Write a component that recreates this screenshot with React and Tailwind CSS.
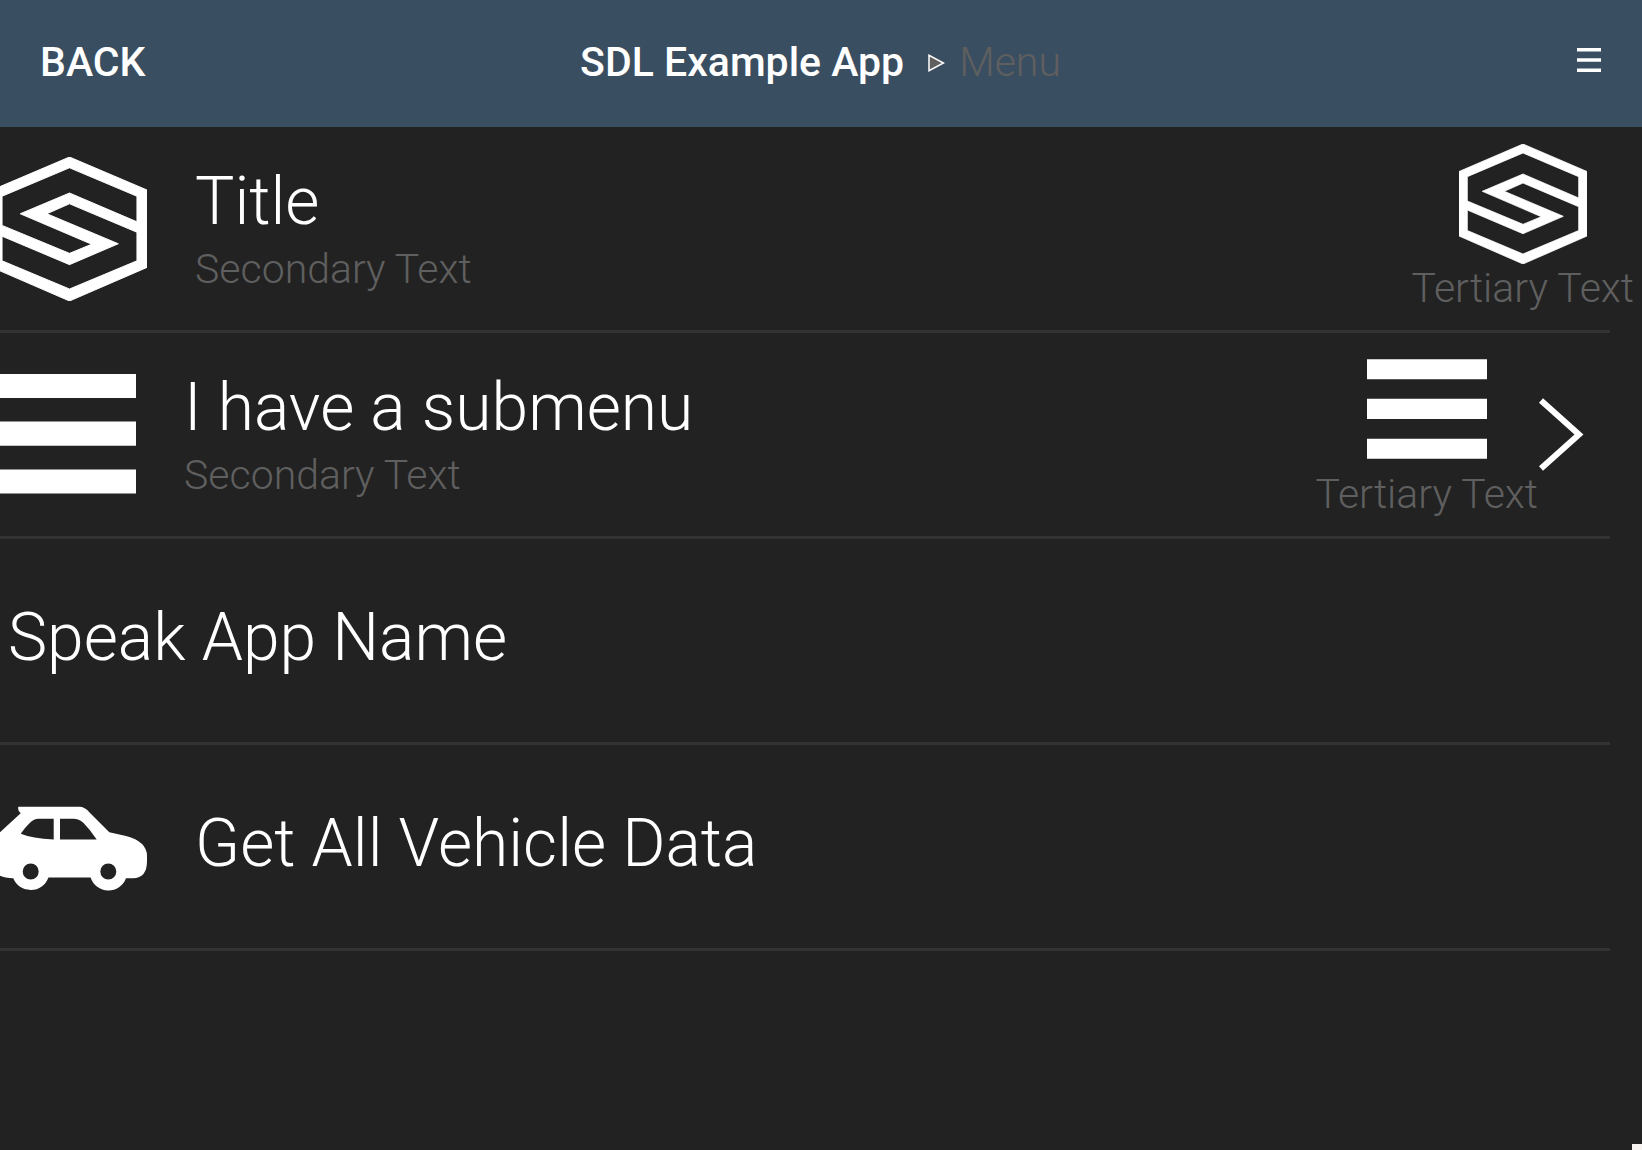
function SdlLogo({ className }) {
  return (
    <svg className={className} viewBox="0 0 128 120" preserveAspectRatio="none" fill="currentColor" stroke="currentColor" strokeWidth="0.800" fillRule="evenodd" aria-hidden="true">
      <path d="M64 0 128 27.5V92L64 120 0 92V27.5ZM64 9 119.7 32.7V54L64 30 23.3 47.3 82.3 72.7 64 80.3 8.3 57V32.7ZM8.3 66 64 89.7 104.3 72.3 45.3 47.3 64 39 119.7 62.7V86.5L64 110 8.3 86.5Z" />
    </svg>
  );
}

function BarsIcon({ className }) {
  return (
    <svg className={className} viewBox="0 0 120 120" fill="currentColor" aria-hidden="true">
      <path d="M0 9.2H120V29.2H0ZM0 48.7H120V69H0ZM0 88.7H120V108.7H0Z" />
    </svg>
  );
}

function CarIcon({ className }) {
  return (
    <svg className={className} viewBox="0 0 155 144" fill="currentColor" fillRule="evenodd" aria-hidden="true">
      <path d="M26.3 31.8H88Q93.500 32.500 97.300 37.200L117.300 57.200L134 61Q155 66.500 155 81V86Q155 103.200 141 103.200H134A18.700 18.700 0 0 1 98.600 102.500H56.400A18.700 18.700 0 0 1 21.300 103.200Q0 103 0 87V74Q0 65 6 59L28.700 38.200Q25.500 36 26.300 31.800ZM28.700 58.800Q32.500 53 38 47.800Q42 43.800 46.300 43.800H61.700V64.500Q40 63.500 28.700 58.800ZM68 43.800H81.300Q87 44 91.300 47.800Q98 54.500 104.700 64.500H68ZM38.700 88.500A8 8 0 1 0 38.700 104.500A8 8 0 1 0 38.700 88.500ZM116.300 88.500A8 8 0 1 0 116.300 104.500A8 8 0 1 0 116.300 88.500Z" />
    </svg>
  );
}

function ChevronIcon({ className }) {
  return (
    <svg className={className} viewBox="0 0 46 74" fill="none" stroke="currentColor" strokeWidth="6" aria-hidden="true">
      <path d="M3 2.500 41 36.500 3 70.500" />
    </svg>
  );
}

const rows = [
  { title: "Title", secondary: "Secondary Text", tertiary: "Tertiary Text", Icon: SdlLogo, iconClass: "w-[155px] h-36", endIconClass: "w-32 h-[120px]" },
  { title: "I have a submenu", secondary: "Secondary Text", tertiary: "Tertiary Text", Icon: BarsIcon, iconClass: "w-36 h-36", endIconClass: "w-[120px] h-[120px]", submenu: true },
  { title: "Speak App Name" },
  { title: "Get All Vehicle Data", Icon: CarIcon, iconClass: "w-[155px] h-36" },
];

function MenuRow({ title, secondary, tertiary, Icon, iconClass, endIconClass, submenu }) {
  return (
    <li>
      <button type="button" className="flex h-[203px] w-full items-center text-left">
        {Icon && <Icon className={`-ml-2 shrink-0 ${iconClass}`} />}
        <span className={`flex flex-1 flex-col whitespace-nowrap ${Icon ? "ml-12" : "ml-2"} ${secondary ? "" : "pb-1.5"}`}>
          <span className="text-[66px] leading-[80px]">{title}</span>
          {secondary && <span className="text-[41px] leading-[54px] text-[#5f5f5f]">{secondary}</span>}
        </span>
        {tertiary && (
          <span className={`flex flex-col items-center pb-0.5 whitespace-nowrap ${submenu ? "" : "mr-2"}`}>
            <Icon className={endIconClass} />
            <span className="text-[41px] leading-[48px] text-[#5f5f5f]">{tertiary}</span>
          </span>
        )}
        {submenu && <ChevronIcon className="mr-[58px] h-[74px] w-[46px] shrink-0" />}
      </button>
      <div className="mr-8 h-[3px] bg-[#333333]" />
    </li>
  );
}

export default function App() {
  return (
    <div className="relative min-h-screen overflow-hidden bg-[#222222] font-['Roboto',sans-serif] font-light text-white">
      <header className="grid h-[127px] grid-cols-[1fr_auto_1fr] items-center bg-[#3a4e61] pr-[41px] pb-1 pl-10 text-[41px] leading-[48px]">
        <button type="button" className="justify-self-start font-medium">BACK</button>
        <div className="flex items-center">
          <h1 className="font-medium">SDL Example App</h1>
          <svg className="mt-0.5 mr-3.5 ml-6 h-[18px] w-[17px]" viewBox="0 0 17 18" fill="#5f5f5f" stroke="white" strokeWidth="1.500" aria-hidden="true">
            <path d="M1 1.300V16.700L15.500 9Z" />
          </svg>
          <span className="text-[#5f5f5f]">Menu</span>
        </div>
        <button type="button" aria-label="Open menu" className="mb-1 justify-self-end">
          <svg className="h-6 w-6" viewBox="0 0 24 24" fill="currentColor" aria-hidden="true">
            <path d="M0 0H24V3.500H0ZM0 10.250H24V13.750H0ZM0 20.500H24V24H0Z" />
          </svg>
        </button>
      </header>
      <main>
        <ul>
          {rows.map((row) => (
            <MenuRow key={row.title} {...row} />
          ))}
        </ul>
      </main>
      <div className="absolute right-0 bottom-0 h-1.5 w-2.5 bg-[#f6f3f0]" />
    </div>
  );
}
